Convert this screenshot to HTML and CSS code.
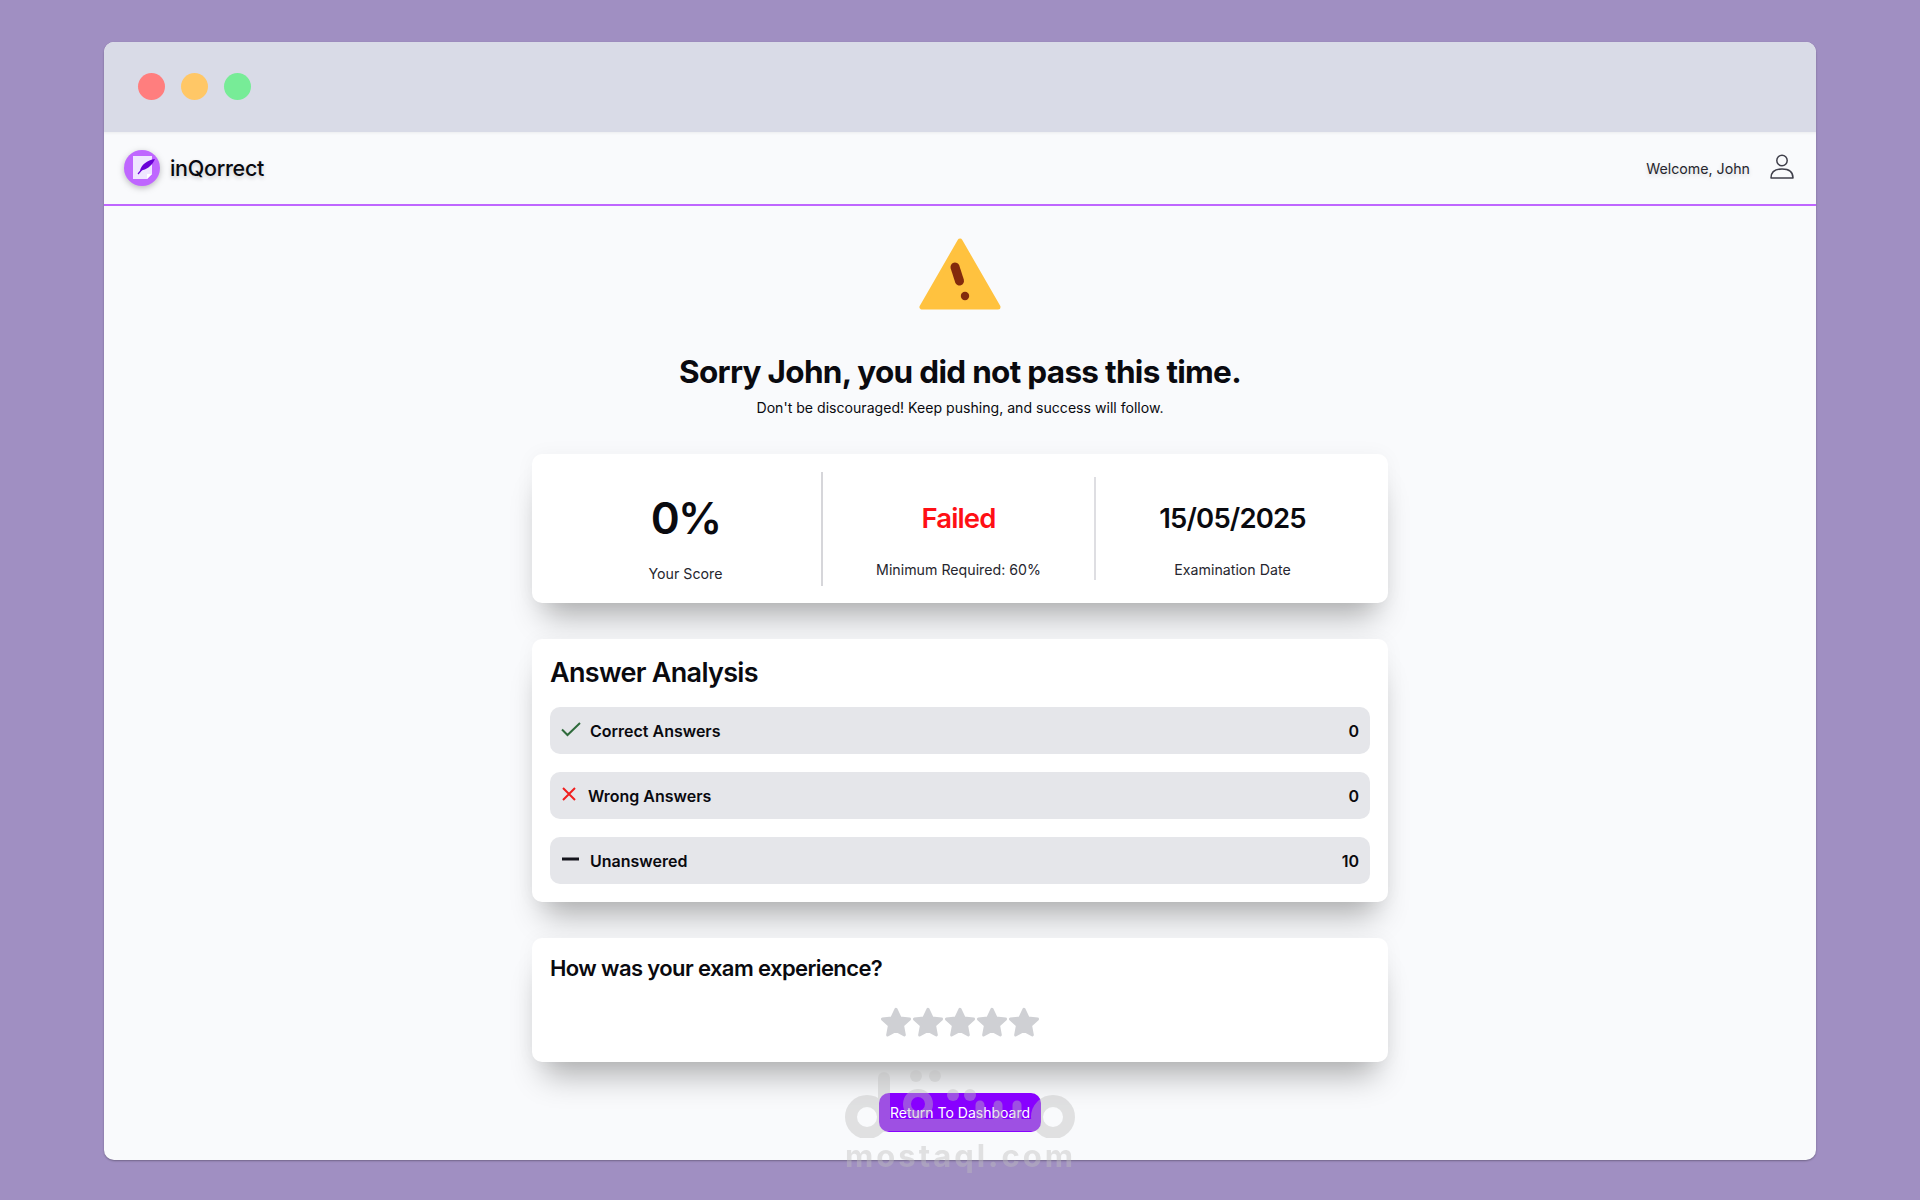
FILE: index.html
```html
<!DOCTYPE html>
<html lang="en">
<head>
    <meta charset="UTF-8">
    <meta name="viewport" content="width=device-width, initial-scale=1.0">
    <title>inQorrect - Exam Result</title>
    <link rel="stylesheet" href="styles.css">
</head>
<body>
    <div class="window">
        <div class="titlebar">
            <span class="dot dot-red"></span>
            <span class="dot dot-yellow"></span>
            <span class="dot dot-green"></span>
        </div>

        <header class="navbar">
            <div class="brand">
                <svg class="brand-logo" viewBox="0 0 36 36">
                    <circle cx="18" cy="18" r="18" fill="#bf66ff"/>
                    <path d="M9 6h19v18l-5 5H9z" fill="#efe6ff"/>
                    <path d="M23 29v-5h5z" fill="#fff"/>
                    <path d="M16 21c1-6 7-11 15-12-2 5-7 10-12 11z" fill="#6a00d8"/>
                    <path d="M14 24l6-7" stroke="#6a00d8" stroke-width="1.2"/>
                </svg>
                <span class="brand-name">inQorrect</span>
            </div>
            <div class="user">
                <span class="welcome">Welcome, John</span>
                <svg class="user-icon" viewBox="0 0 24 25" fill="none" stroke="#3f3f4a" stroke-width="1.5">
                    <circle cx="12" cy="6.5" r="5.2"/>
                    <path d="M1 24c0-6 4-9 11-9s11 3 11 9z" stroke-linejoin="round"/>
                </svg>
            </div>
        </header>

        <main class="content">
            <svg class="warning" viewBox="0 0 82 72">
                <path d="M41 3L3 69h76z" fill="#ffc23f" stroke="#ffc23f" stroke-width="5" stroke-linejoin="round"/>
                <path d="M36 29l4.500 14" stroke="#832a0c" stroke-width="9" stroke-linecap="round"/>
                <circle cx="46" cy="58" r="4.200" fill="#832a0c"/>
            </svg>
            <h1 class="title">Sorry John, you did not pass this time.</h1>
            <p class="subtitle">Don't be discouraged! Keep pushing, and success will follow.</p>

            <section class="card stats">
                <div class="stat stat-score">
                    <div class="score">0%</div>
                    <div class="stat-label">Your Score</div>
                </div>
                <div class="stat stat-status">
                    <div class="stat-value failed">Failed</div>
                    <div class="stat-label">Minimum Required: 60%</div>
                </div>
                <div class="stat stat-date">
                    <div class="stat-value">15/05/2025</div>
                    <div class="stat-label">Examination Date</div>
                </div>
            </section>

            <section class="card analysis">
                <h2>Answer Analysis</h2>
                <div class="row">
                    <svg class="row-icon" viewBox="0 0 20 16" fill="none" stroke="#2f6b3c" stroke-width="2">
                        <path d="M1 8.500l5.500 5.500L19 2"/>
                    </svg>
                    <span class="row-name">Correct Answers</span>
                    <span class="row-count">0</span>
                </div>
                <div class="row">
                    <svg class="row-icon row-icon-x" viewBox="0 0 16 16" fill="none" stroke="#f02020" stroke-width="2">
                        <path d="M2 2l12 12M14 2L2 14"/>
                    </svg>
                    <span class="row-name">Wrong Answers</span>
                    <span class="row-count">0</span>
                </div>
                <div class="row">
                    <svg class="row-icon" viewBox="0 0 20 16" fill="none" stroke="#14141c" stroke-width="3">
                        <path d="M1 8h17"/>
                    </svg>
                    <span class="row-name">Unanswered</span>
                    <span class="row-count">10</span>
                </div>
            </section>

            <section class="card feedback">
                <h3>How was your exam experience?</h3>
                <div class="stars">
                    <svg class="star" viewBox="1.800 1.500 20.400 20.400"><path d="M12 3l2.800 5.900 6.400.8-4.700 4.400 1.200 6.400-5.700-3.100-5.700 3.100 1.200-6.400-4.700-4.400 6.400-.8z"/></svg>
                    <svg class="star" viewBox="1.800 1.500 20.400 20.400"><path d="M12 3l2.800 5.900 6.400.8-4.700 4.400 1.200 6.400-5.700-3.100-5.700 3.100 1.200-6.400-4.700-4.400 6.400-.8z"/></svg>
                    <svg class="star" viewBox="1.800 1.500 20.400 20.400"><path d="M12 3l2.800 5.900 6.400.8-4.700 4.400 1.200 6.400-5.700-3.100-5.700 3.100 1.200-6.400-4.700-4.400 6.400-.8z"/></svg>
                    <svg class="star" viewBox="1.800 1.500 20.400 20.400"><path d="M12 3l2.800 5.900 6.400.8-4.700 4.400 1.200 6.400-5.700-3.100-5.700 3.100 1.200-6.400-4.700-4.400 6.400-.8z"/></svg>
                    <svg class="star" viewBox="1.800 1.500 20.400 20.400"><path d="M12 3l2.800 5.900 6.400.8-4.700 4.400 1.200 6.400-5.700-3.100-5.700 3.100 1.200-6.400-4.700-4.400 6.400-.8z"/></svg>
                </div>
            </section>

            <button class="return-btn">Return To Dashboard</button>
        </main>
    </div>

    <!-- watermark -->
    <div class="watermark">
        <svg class="watermark-logo" viewBox="0 0 230 68" fill="none" stroke="#bebebe" stroke-linecap="round">
            <g stroke-width="12">
                <circle cx="22" cy="47" r="16"/>
                <circle cx="208" cy="47" r="16"/>
                <path d="M39 8v48"/>
            </g>
            <path d="M39 55h153" stroke-width="12" stroke-linecap="butt"/>
            <circle cx="73" cy="34" r="11" stroke-width="8"/>
            <path d="M135 35v16M153 35v16M172 35v16" stroke-width="9"/>
            <g fill="#bebebe" stroke="none">
                <circle cx="71" cy="6" r="6"/>
                <circle cx="90" cy="6" r="6"/>
                <circle cx="108" cy="25" r="6"/>
                <circle cx="125" cy="25" r="6"/>
            </g>
        </svg>
        <div class="watermark-text">mostaql.com</div>
    </div>
</body>
</html>
```

FILE: styles.css
```css
/* page */
body {
    margin: 0;
    height: 1200px;
    box-sizing: border-box;
    padding: 42px 104px 40px;
    background-color: #a08fc2;
    font-family: Inter, 'Liberation Sans', sans-serif;
    color: #0a0a0f;
    position: relative;
    overflow: hidden;
}

.window {
    height: 1118px;
    border-radius: 10px;
    overflow: hidden;
    background-color: #f9fafc;
    box-shadow: 0 1px 2px rgba(0, 0, 0, 0.3);
}

/* title bar */
.titlebar {
    height: 90px;
    box-sizing: border-box;
    padding: 0 34px 2px;
    display: flex;
    align-items: center;
    gap: 16px;
    background-color: #d9dbe7;
}

.dot {
    width: 27px;
    height: 27px;
    border-radius: 50%;
}

.dot-red { background-color: #ff7e7e; }
.dot-yellow { background-color: #ffc766; }
.dot-green { background-color: #77ec97; }

/* nav */
.navbar {
    height: 74px;
    box-sizing: border-box;
    padding: 0 22px 0 20px;
    display: flex;
    align-items: center;
    justify-content: space-between;
    border-bottom: 2px solid #bf66ff;
    box-shadow: inset 0 3px 3px -2px rgba(0, 0, 0, 0.06);
}

.brand {
    display: flex;
    align-items: center;
    gap: 10px;
}

.brand-logo {
    width: 36px;
    height: 36px;
    filter: drop-shadow(0 2px 3px rgba(0, 0, 0, 0.25));
}

.brand-name {
    font-size: 21.500px;
    font-weight: 500;
    letter-spacing: -0.3px;
    text-shadow: 0 2px 4px rgba(0, 0, 0, 0.2);
}

.user {
    display: flex;
    align-items: center;
    gap: 20px;
}

.welcome {
    font-size: 14.200px;
    color: #26262e;
    text-shadow: 0 2px 4px rgba(0, 0, 0, 0.15);
}

.user-icon {
    width: 24px;
    height: 25px;
    margin-top: -4px;
}

/* content */
.content {
    display: flex;
    flex-direction: column;
    align-items: center;
}

.warning {
    width: 82px;
    height: 72px;
    margin-top: 32px;
}

.title {
    margin: 42px 0 0;
    font-size: 31.500px;
    line-height: 40px;
    font-weight: 700;
    letter-spacing: -0.7px;
}

.subtitle {
    margin: 6px 0 0;
    font-size: 14.100px;
    line-height: 20px;
}

.card {
    width: 856px;
    box-sizing: border-box;
    background-color: #fff;
    border-radius: 10px;
    box-shadow: 0 25px 30px -12px rgba(0, 0, 0, 0.3), 0 0 20px rgba(0, 0, 0, 0.04);
}

/* score card */
.stats {
    height: 149px;
    margin-top: 36px;
    padding: 0 18px;
    display: flex;
    align-items: center;
    text-align: center;
}

.stat {
    width: 273px;
    box-sizing: border-box;
}

.stat-score {
    height: 114px;
    padding-top: 20px;
    border-right: 2px solid #d6d6da;
}

.stat-status {
    height: 103px;
    padding-top: 25px;
    border-right: 2px solid #dedee2;
}

.stat-date {
    height: 103px;
    padding-top: 25px;
}

.score {
    font-size: 44px;
    line-height: 52px;
    font-weight: 600;
    letter-spacing: -1.8px;
}

.stat-value {
    font-size: 27.500px;
    line-height: 32px;
    font-weight: 600;
    letter-spacing: -0.85px;
}

.failed {
    color: #ff0f14;
}

.stat-label {
    margin-top: 20px;
    font-size: 14.200px;
    line-height: 20px;
    color: #26262e;
}

.stat-status .stat-label,
.stat-date .stat-label {
    margin-top: 26px;
}

/* answer analysis */
.analysis {
    height: 263px;
    margin-top: 36px;
    padding: 18px;
    display: flex;
    flex-direction: column;
    gap: 18px;
}

.analysis h2 {
    margin: 0;
    height: 32px;
    font-size: 27px;
    line-height: 32px;
    font-weight: 600;
    letter-spacing: -0.7px;
}

.row {
    height: 47px;
    box-sizing: border-box;
    padding: 0 11px;
    display: flex;
    align-items: center;
    gap: 9px;
    background-color: #e5e6ea;
    border-radius: 10px;
    font-size: 16px;
    font-weight: 600;
}

.row-icon {
    width: 20px;
    height: 16px;
    margin-top: -4px;
}

.row-icon-x {
    width: 16px;
    margin-right: 2px;
}

.row-name {
    flex: 1;
}

/* feedback */
.feedback {
    height: 124px;
    margin-top: 36px;
    padding: 18px;
}

.feedback h3 {
    margin: 0;
    font-size: 22px;
    line-height: 24px;
    font-weight: 600;
    letter-spacing: -0.6px;
}

.stars {
    margin-top: 27px;
    display: flex;
    justify-content: center;
    gap: 2px;
}

.star {
    width: 30px;
    height: 30px;
    fill: #cfd0d4;
    stroke: #cfd0d4;
    stroke-width: 2;
    stroke-linejoin: round;
}

/* button */
.return-btn {
    margin-top: 31px;
    width: 162px;
    height: 39px;
    padding: 0;
    border: none;
    border-radius: 10px;
    background-color: #8800ff;
    color: #fff;
    font-family: inherit;
    font-size: 14px;
}

/* watermark over everything */
.watermark {
    position: absolute;
    left: 845px;
    top: 1070px;
    width: 230px;
    opacity: 0.42;
    pointer-events: none;
}

.watermark-logo {
    display: block;
    width: 230px;
    height: 68px;
}

.watermark-text {
    font-size: 31px;
    line-height: 36px;
    font-weight: 700;
    letter-spacing: 3px;
    text-align: center;
    white-space: nowrap;
    color: #bebebe;
}
```
